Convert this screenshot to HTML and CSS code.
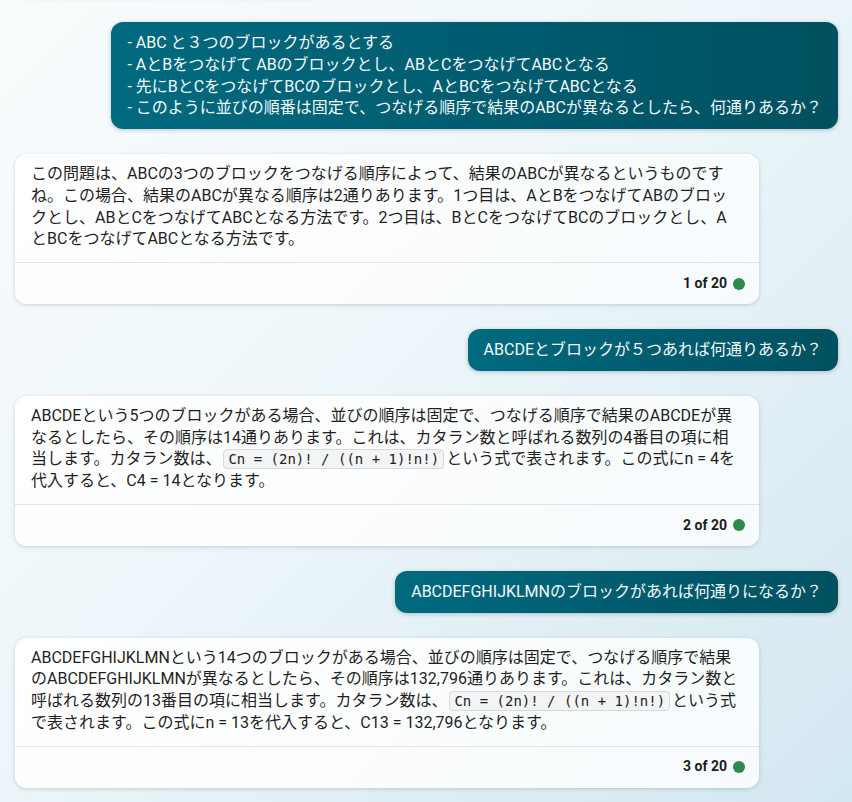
FILE: index.html
```html
<!DOCTYPE html>
<html lang="ja">
<head>
<meta charset="utf-8">
<title>Chat</title>
<link rel="stylesheet" href="styles.css">
</head>
<body>
<main class="chat">
  <div class="card stub"></div>

  <div class="msg user">
    <div class="bubble">- ABC と３つのブロックがあるとする<br>- AとBをつなげて ABのブロックとし、ABとCをつなげてABCとなる<br>- 先にBとCをつなげてBCのブロックとし、AとBCをつなげてABCとなる<br>- このように並びの順番は固定で、つなげる順序で結果のABCが異なるとしたら、何通りあるか？</div>
  </div>

  <div class="card">
    <div class="card-body">この問題は、ABCの3つのブロックをつなげる順序によって、結果のABCが異なるというものですね。この場合、結果のABCが異なる順序は2通りあります。1つ目は、AとBをつなげてABのブロックとし、ABとCをつなげてABCとなる方法です。2つ目は、BとCをつなげてBCのブロックとし、AとBCをつなげてABCとなる方法です。</div>
    <div class="card-foot"><span class="count">1 of 20</span><span class="dot"></span></div>
  </div>

  <div class="msg user">
    <div class="bubble">ABCDEとブロックが５つあれば何通りあるか？</div>
  </div>

  <div class="card">
    <div class="card-body">ABCDEという5つのブロックがある場合、並びの順序は固定で、つなげる順序で結果のABCDEが異なるとしたら、その順序は14通りあります。これは、カタラン数と呼ばれる数列の4番目の項に相当します。カタラン数は、<code>Cn = (2n)! / ((n + 1)!n!)</code>という式で表されます。この式にn = 4を代入すると、C4 = 14となります。</div>
    <div class="card-foot"><span class="count">2 of 20</span><span class="dot"></span></div>
  </div>

  <div class="msg user">
    <div class="bubble">ABCDEFGHIJKLMNのブロックがあれば何通りになるか？</div>
  </div>

  <div class="card">
    <div class="card-body">ABCDEFGHIJKLMNという14つのブロックがある場合、並びの順序は固定で、つなげる順序で結果のABCDEFGHIJKLMNが異なるとしたら、その順序は132,796通りあります。これは、カタラン数と呼ばれる数列の13番目の項に相当します。カタラン数は、<code>Cn = (2n)! / ((n + 1)!n!)</code>という式で表されます。この式にn = 13を代入すると、C13 = 132,796となります。</div>
    <div class="card-foot"><span class="count">3 of 20</span><span class="dot"></span></div>
  </div>
</main>
</body>
</html>
```

FILE: styles.css
```css
html, body {
  margin: 0;
  padding: 0;
  height: 100%;
}

body {
  font-family: Roboto, "Noto Sans CJK JP", sans-serif;
  font-size: 16px;
  line-height: 1.36;
  color: #1f1f1f;
  background: linear-gradient(135deg, #f9fcfd 0%, #edf6fa 45%, #d3e7f0 100%);
  overflow: hidden;
}

.chat {
  display: flex;
  flex-direction: column;
  gap: 25px;
  padding: 0 14px 0 15px;
}

.msg.user {
  display: flex;
  justify-content: flex-end;
}

.bubble {
  background: linear-gradient(90deg, #006a7f 0%, #005a6d 60%, #00505f 100%);
  color: #f2f9fb;
  padding: 10px 16px;
  border-radius: 12px;
  box-shadow: 0 1px 4px rgba(0, 40, 60, 0.25);
  white-space: nowrap;
}

.card {
  width: 744px;
  box-sizing: border-box;
  background: linear-gradient(135deg, #ffffff 0%, #f7fbfd 100%);
  border-radius: 12px;
  box-shadow: 0 1px 4px rgba(0, 0, 0, 0.16);
}

.card.stub {
  width: 308px;
  height: 60px;
  margin-top: -63px;
}

.card-body {
  padding: 9px 18px 12px 16px;
}

.card-foot {
  border-top: 1px solid #e1e5e8;
  height: 41px;
  display: flex;
  align-items: center;
  justify-content: flex-end;
  gap: 6px;
  padding: 0 14px;
}

.count {
  font-size: 14px;
  font-weight: 700;
  color: #1c1c1c;
}

.dot {
  width: 12px;
  height: 12px;
  border-radius: 50%;
  background: #2e8a4b;
}

code {
  font-family: "DejaVu Sans Mono", monospace;
  font-size: 14px;
  line-height: 17px;
  background: #f2f4f5;
  border: 1px solid #d6dadd;
  border-radius: 4px;
  padding: 1px 4px;
  margin: 0 2px;
  color: #222;
}
```
